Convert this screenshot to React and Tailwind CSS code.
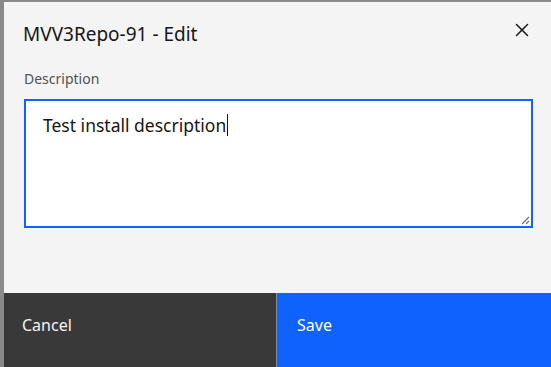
import { X } from "lucide-react"

const FONT = "font-['Noto_Sans','Open_Sans',sans-serif]"

export default function App() {
  return (
    <div className={`flex h-[367px] w-[551px] overflow-hidden bg-[#8a8a8a] pl-[4px] pt-[2px] ${FONT}`}>
      <div className="flex flex-1 flex-col bg-[#f4f4f4]">
        <div className="flex items-start justify-between pl-[19px] pr-[18px] pt-[18px]">
          <h2 className="text-[19px] leading-[28px] font-normal text-[#161616]">MVV3Repo-91 - Edit</h2>
          <button className="-mt-[1px] text-[#161616]">
            <X size={22} strokeWidth={1.6} />
          </button>
        </div>

        <div className="pl-[20px] pr-[14px] pt-[22px]">
          <label className="block text-[14px] leading-[18px] text-[#525252]">Description</label>
          <div className="relative mt-[11px] h-[129px] w-[509px] border-2 border-[#0f62fe] bg-white">
            <p className="pl-[17px] pt-[9px] text-[17.5px] leading-[24px] text-[#161616]">
              Test install description<span className="ml-[1px] inline-block h-[22px] w-px translate-y-[4px] bg-[#161616]" />
            </p>
            <svg className="absolute bottom-[1px] right-[1px]" width="9" height="9" viewBox="0 0 9 9">
              <path d="M8 1 L1 8 M8 5 L5 8" stroke="#6f6f6f" strokeWidth="1.2" />
            </svg>
          </div>
        </div>

        <div className="mt-auto flex h-[74px] gap-px bg-[#8c8c8c]">
          <button className="flex-1 bg-[#393939] pl-[18px] pb-[10px] text-left text-[16px] text-[#f4f4f4]">Cancel</button>
          <button className="flex-1 bg-[#0f62fe] pl-[20px] pb-[10px] text-left text-[16px] text-white">Save</button>
        </div>
      </div>
    </div>
  )
}
